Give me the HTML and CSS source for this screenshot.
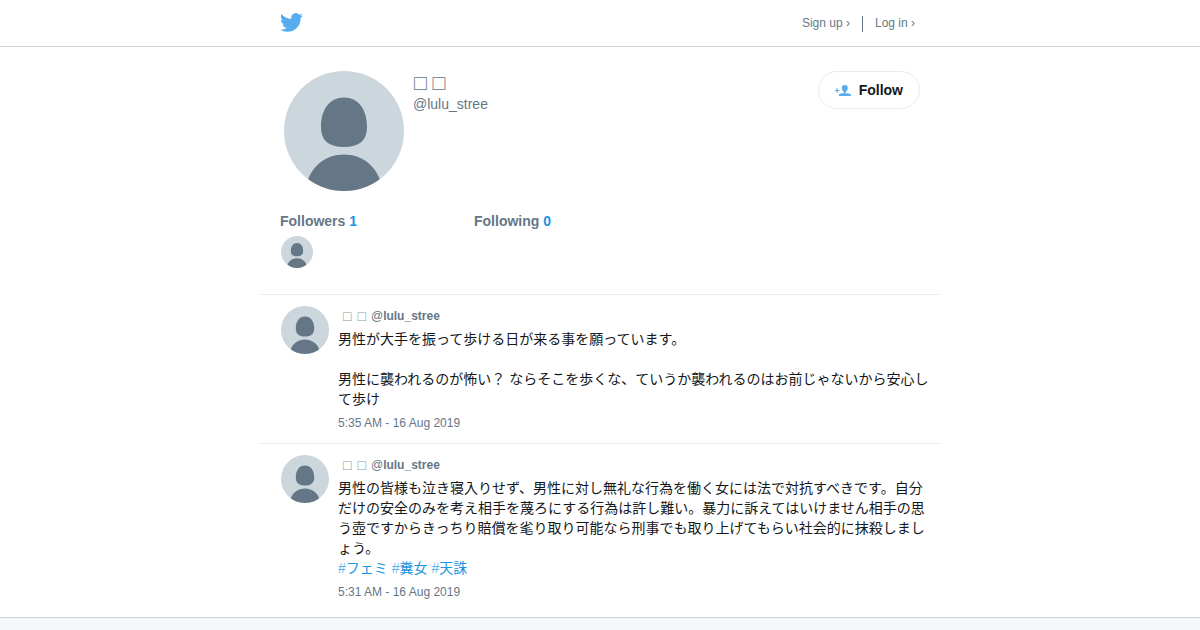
FILE: index.html
```html
<!DOCTYPE html>
<html lang="ja">
<head>
    <meta charset="UTF-8">
    <meta name="viewport" content="width=device-width, initial-scale=1.0">
    <title>@lulu_stree | Twitter</title>
    <link rel="stylesheet" href="styles.css">
</head>
<body>
    <svg class="defs" aria-hidden="true">
        <symbol id="avatar" viewBox="0 0 120 120">
            <clipPath id="round"><circle cx="60" cy="60" r="60"/></clipPath>
            <g clip-path="url(#round)">
                <rect width="120" height="120" fill="#ccd6dd"/>
                <path fill="#657786" d="M60 26.500c-14 0-23 11.500-23 29.500 0 14 8 20 23 20s23-6 23-20c0-18-9-29.500-23-29.500zM22 116c4-20 19-32.500 38-32.500s34 12.500 38 32.500v8H22z"/>
            </g>
        </symbol>
    </svg>
    <header class="topbar">
        <div class="topbar-inner">
            <a href="#" class="logo" aria-label="Twitter">
                <svg width="23" height="23" viewBox="0 0 24 24"><path fill="#55acee" d="M23.953 4.570a10 10 0 01-2.825.775 4.958 4.958 0 002.163-2.723c-.951.555-2.005.959-3.127 1.184a4.920 4.920 0 00-8.384 4.482C7.690 8.095 4.067 6.130 1.640 3.162a4.822 4.822 0 00-.666 2.475c0 1.710.870 3.213 2.188 4.096a4.904 4.904 0 01-2.228-.616v.060a4.923 4.923 0 003.946 4.827 4.996 4.996 0 01-2.212.085 4.936 4.936 0 004.604 3.417 9.867 9.867 0 01-6.102 2.105c-.390 0-.779-.023-1.170-.067a13.995 13.995 0 007.557 2.209c9.053 0 13.998-7.496 13.998-13.985 0-.210 0-.420-.015-.630A9.935 9.935 0 0024 4.590z"/></svg>
            </a>
            <nav class="session">
                <a href="#">Sign up ›</a>
                <a href="#" class="login">Log in ›</a>
            </nav>
        </div>
    </header>
    <main class="page">
        <section class="profile">
            <svg class="avatar-large"><use href="#avatar"/></svg>
            <div class="names">
                <h1>□ □</h1>
                <span class="handle">@lulu_stree</span>
            </div>
            <button class="follow">
                <svg width="16" height="12" viewBox="0 0 16 12" fill="#55acee"><path d="M1.500 4h1v2h2v1h-2v2h-1V7H0V6h1.500zM9.800 1C7.900 1 6.700 2.200 6.800 4c.1 1.900 1.200 3.200 2 3.800v1.300h2V7.800c.8-.6 1.900-1.900 2-3.800.1-1.800-1.100-3-3-3zM4 12v-1.200C4 9.700 5.500 9.200 9.800 9.200s6.200.5 6.200 1.600V12z"/></svg>
                Follow
            </button>
        </section>
        <section class="stats">
            <div class="stat">
                <a href="#">Followers <b>1</b></a>
                <svg class="avatar-mini"><use href="#avatar"/></svg>
            </div>
            <div class="stat">
                <a href="#">Following <b>0</b></a>
            </div>
        </section>
        <article class="tweet">
            <svg class="avatar-small"><use href="#avatar"/></svg>
            <div class="tweet-body">
                <div class="author"><span class="author-name"><span>□</span> <span>□</span></span><span>@<b>lulu_stree</b></span></div>
                <p>男性が大手を振って歩ける日が来る事を願っています。<br><br>男性に襲われるのが怖い？ ならそこを歩くな、ていうか襲われるのはお前じゃないから安心して歩け</p>
                <a href="#" class="time">5:35 AM - 16 Aug 2019</a>
            </div>
        </article>
        <article class="tweet">
            <svg class="avatar-small"><use href="#avatar"/></svg>
            <div class="tweet-body">
                <div class="author"><span class="author-name"><span>□</span> <span>□</span></span><span>@<b>lulu_stree</b></span></div>
                <p>男性の皆様も泣き寝入りせず、男性に対し無礼な行為を働く女には法で対抗すべきです。自分だけの安全のみを考え相手を蔑ろにする行為は許し難い。暴力に訴えてはいけません相手の思う壺ですからきっちり賠償を毟り取り可能なら刑事でも取り上げてもらい社会的に抹殺しましょう。<br><a href="#" class="tag"><span>#</span>フェミ</a> <a href="#" class="tag"><span>#</span>糞女</a> <a href="#" class="tag"><span>#</span>天誅</a></p>
                <a href="#" class="time">5:31 AM - 16 Aug 2019</a>
            </div>
        </article>
    </main>
    <footer class="footer"></footer>
</body>
</html>
```

FILE: styles.css
```css
* {
    box-sizing: border-box;
}
body {
    margin: 0;
    min-height: 100vh;
    display: flex;
    flex-direction: column;
    font-family: "Liberation Sans", "Noto Sans CJK JP", sans-serif;
    font-size: 14px;
    line-height: 20px;
    color: #14171a;
    background: #fff;
}
a {
    color: inherit;
    text-decoration: none;
}
svg {
    display: block;
    flex: none;
}
.defs {
    position: absolute;
    width: 0;
    height: 0;
}
.topbar {
    border-bottom: 1px solid #ccd6dd;
}
.topbar-inner {
    max-width: 680px;
    height: 46px;
    margin: 0 auto;
    padding: 0 25px 2px 20px;
    display: flex;
    justify-content: space-between;
    align-items: center;
}
.session {
    display: flex;
    align-items: center;
    font-size: 12px;
    line-height: 14px;
    color: #657786;
    padding-top: 3px;
}
.session a {
    padding-bottom: 2px;
}
.session .login {
    border-left: 1px solid #657786;
    margin-left: 12px;
    padding-left: 12px;
}
.page {
    width: 100%;
    max-width: 680px;
    margin: 0 auto;
}
.profile {
    display: flex;
    align-items: flex-start;
    padding: 24px 20px 20px 24px;
}
.avatar-large {
    width: 120px;
    height: 120px;
}
.names {
    flex: 1;
    padding-left: 9px;
    color: #657786;
}
h1 {
    margin: 0;
    padding-left: 1px;
    font-size: 21px;
    line-height: 23px;
    font-weight: normal;
}
.handle {
    display: block;
}
.follow {
    display: flex;
    align-items: center;
    gap: 8px;
    height: 38px;
    padding: 0 16px;
    border: 1px solid #e6ecf0;
    border-radius: 19px;
    background: #fff;
    color: #14171a;
    font: bold 14px/20px "Liberation Sans", sans-serif;
    cursor: pointer;
}
.stats {
    display: grid;
    grid-template-columns: 194px 1fr;
    padding: 0 20px 26px;
    font-weight: bold;
    color: #657786;
}
.stats b {
    color: #1b95e0;
}
.avatar-mini {
    width: 32px;
    height: 32px;
    margin: 5px 0 0 1px;
}
.tweet {
    display: flex;
    gap: 9px;
    padding: 11px 8px 12px 21px;
    border-top: 1px solid #e6ecf0;
}
.avatar-small {
    width: 48px;
    height: 48px;
}
.tweet-body {
    flex: 1;
}
.author {
    display: flex;
    height: 20px;
    color: #657786;
    font-size: 12px;
}
.author-name {
    display: flex;
    gap: 6px;
    padding: 0 5px;
    font-size: 14px;
    color: #8899a6;
}
.tweet p {
    margin: 3px 0 6px;
}
.time {
    display: block;
    font-size: 12px;
    line-height: 16px;
    color: #657786;
}
.tag {
    color: #1b95e0;
}
.tag span {
    opacity: 0.7;
}
.tweet:last-child {
    padding-bottom: 17px;
}
.footer {
    flex: 1;
    background: #f5f8fa;
    border-top: 1px solid #ccd6dd;
}
```
